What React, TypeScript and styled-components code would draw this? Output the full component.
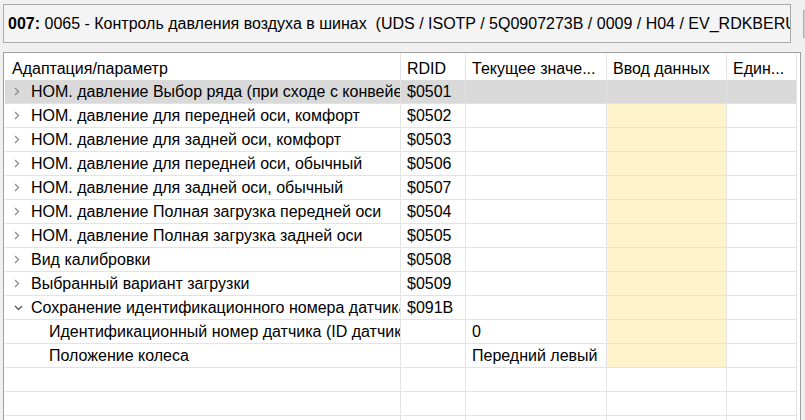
import React from "react";
import styled, { createGlobalStyle } from "styled-components";

const GlobalStyle = createGlobalStyle`
  html, body {
    margin: 0;
    padding: 0;
    background: #f0f0f0;
    overflow: hidden;
  }
  body {
    font-family: "Liberation Sans", Arial, sans-serif;
    font-size: 16px;
    color: #000;
  }
`;

type Row = {
  name: string;
  rdid?: string;
  current?: string;
  level: 0 | 1;
  expander?: "closed" | "open";
  selected?: boolean;
  editable?: boolean;
};

const rows: Row[] = [
  { name: "НОМ. давление Выбор ряда (при сходе с конвейера)", rdid: "$0501", level: 0, expander: "closed", selected: true },
  { name: "НОМ. давление для передней оси, комфорт", rdid: "$0502", level: 0, expander: "closed", editable: true },
  { name: "НОМ. давление для задней оси, комфорт", rdid: "$0503", level: 0, expander: "closed", editable: true },
  { name: "НОМ. давление для передней оси, обычный", rdid: "$0506", level: 0, expander: "closed", editable: true },
  { name: "НОМ. давление для задней оси, обычный", rdid: "$0507", level: 0, expander: "closed", editable: true },
  { name: "НОМ. давление Полная загрузка передней оси", rdid: "$0504", level: 0, expander: "closed", editable: true },
  { name: "НОМ. давление Полная загрузка задней оси", rdid: "$0505", level: 0, expander: "closed", editable: true },
  { name: "Вид калибровки", rdid: "$0508", level: 0, expander: "closed", editable: true },
  { name: "Выбранный вариант загрузки", rdid: "$0509", level: 0, expander: "closed", editable: true },
  { name: "Сохранение идентификационного номера датчика", rdid: "$091B", level: 0, expander: "open", editable: true },
  { name: "Идентификационный номер датчика (ID датчика)", current: "0", level: 1, editable: true },
  { name: "Положение колеса", current: "Передний левый", level: 1, editable: true },
  { name: "", level: 0 },
  { name: "", level: 0 },
  { name: "", level: 0 },
];

const COLS = "396px 65px 141px 120px 70px";

export default function App() {
  return (
    <>
      <GlobalStyle />
      <Page>
        <TitleRow>
          <TitleBox>
            <b>007:</b> 0065 - Контроль давления воздуха в шинах&nbsp; (UDS / ISOTP / 5Q0907273B / 0009 / H04 / EV_RDKBERU)
          </TitleBox>
          <SideButton />
        </TitleRow>
        <Table>
          <HeaderRow>
            <HeadCell $first>Адаптация/параметр</HeadCell>
            <HeadCell>RDID</HeadCell>
            <HeadCell>Текущее значе...</HeadCell>
            <HeadCell>Ввод данных</HeadCell>
            <HeadCell>Един...</HeadCell>
          </HeaderRow>
          {rows.map((r, i) => (
            <BodyRow key={i} $selected={r.selected}>
              <NameCell $level={r.level}>
                <Expander>
                  {r.expander === "closed" && (
                    <svg width="6" height="9" viewBox="0 0 6 9">
                      <path d="M1 1 L4.5 4.5 L1 8" fill="none" stroke="#8a8a8a" strokeWidth="1.3" />
                    </svg>
                  )}
                  {r.expander === "open" && (
                    <svg width="9" height="6" viewBox="0 0 9 6">
                      <path d="M1 1 L4.5 4.5 L8 1" fill="none" stroke="#555" strokeWidth="1.3" />
                    </svg>
                  )}
                </Expander>
                {r.name}
              </NameCell>
              <Cell>{r.rdid}</Cell>
              <Cell>{r.current}</Cell>
              <Cell $input={r.editable}></Cell>
              <Cell></Cell>
            </BodyRow>
          ))}
        </Table>
      </Page>
    </>
  );
}

const Page = styled.div`
  padding: 4px 0 0 3px;
  width: 805px;
  height: 420px;
  box-sizing: border-box;
  overflow: hidden;
`;

const TitleRow = styled.div`
  display: flex;
  gap: 12px;
  align-items: flex-start;
`;

const TitleBox = styled.div`
  box-sizing: border-box;
  width: 788px;
  height: 39px;
  flex-shrink: 0;
  border: 1px solid #a9a9a9;
  background: #f4f4f4;
  padding: 0 4px;
  line-height: 38px;
  white-space: nowrap;
  overflow: hidden;
`;

const SideButton = styled.div`
  flex-shrink: 0;
  margin-top: 6px;
  width: 20px;
  height: 26px;
  background: #cccccc;
  border: 1px solid #b0b0b0;
`;

const Table = styled.div`
  margin-top: 9px;
  box-sizing: border-box;
  width: 798px;
  border: 1px solid #a0a0a0;
  border-bottom: none;
  background: #fff;
  padding: 0 3px 0 1px;
`;

const HeaderRow = styled.div`
  display: grid;
  grid-template-columns: ${COLS};
  height: 27px;
`;

const HeadCell = styled.div<{ $first?: boolean }>`
  border-right: 1px solid #e3e3e3;
  padding: 0 0 0 ${(p) => (p.$first ? "7px" : "6px")};
  line-height: 31px;
  white-space: nowrap;
  overflow: hidden;
`;

const BodyRow = styled.div<{ $selected?: boolean }>`
  display: grid;
  grid-template-columns: ${COLS};
  height: 24px;
  box-sizing: border-box;
  border-bottom: 1px solid #e3e3e3;
  background: ${(p) => (p.$selected ? "#d9d9d9" : "#fff")};
`;

const Cell = styled.div<{ $input?: boolean }>`
  border-right: 1px solid #e3e3e3;
  padding-left: 6px;
  line-height: 23px;
  white-space: nowrap;
  overflow: hidden;
  background: ${(p) => (p.$input ? "#fff3cb" : "transparent")};
`;

const NameCell = styled.div<{ $level: number }>`
  display: flex;
  align-items: center;
  border-right: 1px solid #e3e3e3;
  padding-left: ${(p) => (p.$level === 1 ? "44px" : "7px")};
  line-height: 23px;
  white-space: nowrap;
  overflow: hidden;
`;

const Expander = styled.span`
  display: inline-flex;
  align-items: center;
  justify-content: flex-start;
  width: 19px;
  flex-shrink: 0;
  padding-left: 2px;
  box-sizing: border-box;

  &:empty {
    display: none;
  }
`;
